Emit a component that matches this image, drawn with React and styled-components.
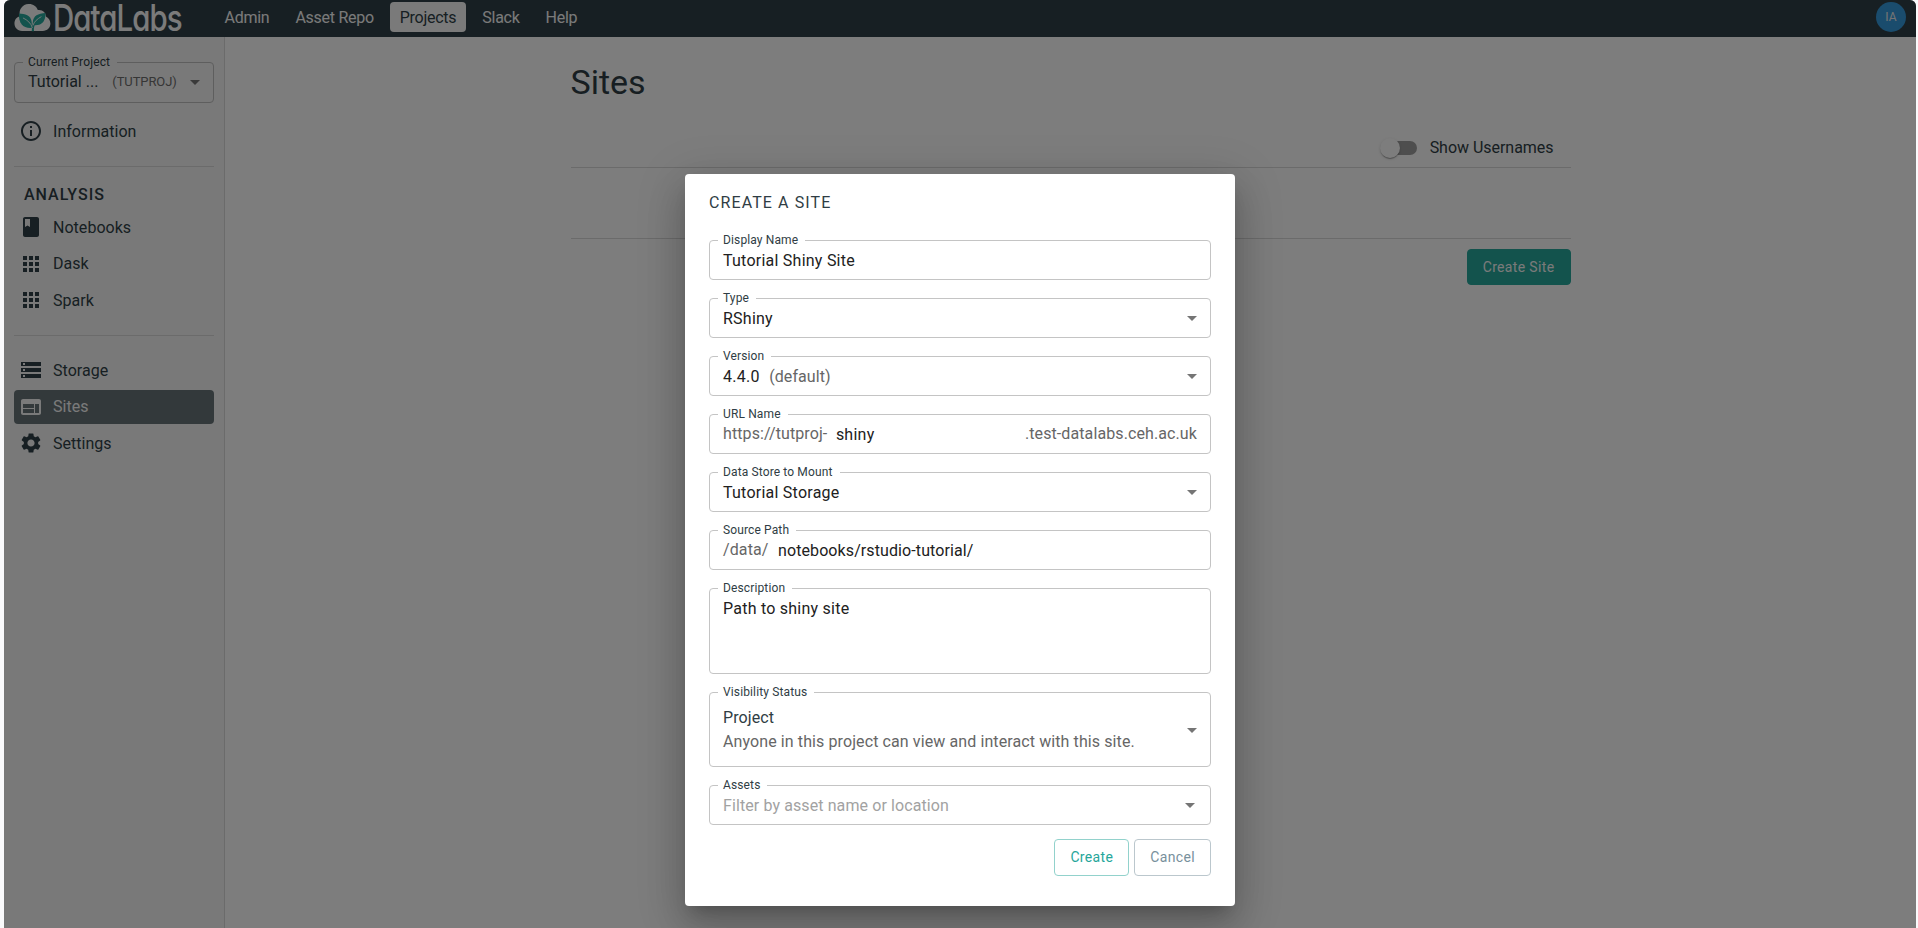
import React from "react";
import styled, { createGlobalStyle } from "styled-components";
import {
  MdInfoOutline,
  MdBook,
  MdApps,
  MdStorage,
  MdWeb,
  MdSettings,
  MdArrowDropDown,
} from "react-icons/md";

const GlobalStyle = createGlobalStyle`
  *, *::before, *::after { box-sizing: border-box; }
  body {
    margin: 0;
    background: #fafafc;
    color: #2f3d44;
    font-family: Roboto, "Liberation Sans", sans-serif;
    font-size: 16px;
    letter-spacing: 0.1px;
    overflow: hidden;
  }
`;

const Frame = styled.div`
  position: relative;
  display: flex;
  flex-direction: column;
  height: 928px;
  margin: 0 2px 0 4px;
  border-radius: 6px 6px 0 0;
  overflow: hidden;
  background: #fafafa;
`;

const TopBar = styled.header`
  flex: none;
  display: flex;
  align-items: center;
  height: 37px;
  padding: 0 10px 3px;
  background: #2f3f46;
`;

const Logo = styled.div`
  display: flex;
  align-items: center;
  width: 200.5px;
  height: 34px;
`;

const LogoText = styled.span`
  margin-left: 2px;
  padding-top: 2px;
  font-family: Inter, Lato, sans-serif;
  font-feature-settings: "cv11";
  font-size: 37px;
  font-weight: 500;
  line-height: 34px;
  letter-spacing: -1.2px;
  color: #f7f7f7;
  transform: scaleX(0.795);
  transform-origin: 0 50%;
`;

const Nav = styled.nav`
  display: flex;
  flex: 1;
  gap: 6px;
  letter-spacing: -0.27px;
`;

const NavLink = styled.a`
  padding: 0 10px;
  height: 30px;
  line-height: 31px;
  border-radius: 4px;
  color: ${(p) => (p.$active ? "#2f3f46" : "#f5f5f5")};
  background: ${(p) => (p.$active ? "#f5f5f5" : "transparent")};
`;

const Avatar = styled.div`
  width: 30px;
  height: 30px;
  border-radius: 50%;
  background: #3498db;
  color: #e8e8e8;
  font-size: 12px;
  line-height: 30px;
  text-align: center;
`;

const Body = styled.div`
  flex: 1;
  display: flex;
`;

const Sidebar = styled.aside`
  width: 221px;
  padding: 25px 10px 0;
  background: #f3f3f3;
  border-right: 1px solid #d6d6d6;
`;

const Outline = styled.div`
  position: relative;
  display: flex;
  align-items: ${(p) => (p.$top ? "flex-start" : "center")};
  height: ${(p) => p.$height || 40}px;
  padding: ${(p) => (p.$top ? "10px" : "0")} 13px 0;
  border: 1px solid ${(p) => p.$line || "#c4c4c4"};
  border-radius: 4px;
`;

const Label = styled.label`
  position: absolute;
  top: -9px;
  left: 8px;
  padding: 0 7px 0 5px;
  font-size: 12px;
  line-height: 16px;
  letter-spacing: 0.13px;
  color: #2f3d44;
  background: ${(p) => p.$bg || "#fff"};
`;

const Arrow = styled(MdArrowDropDown)`
  flex: none;
  width: 24px;
  height: 24px;
  margin-left: auto;
  margin-right: ${(p) => p.$inset || -7}px;
  margin-bottom: ${(p) => p.$lift || 0}px;
  color: #757575;
`;

const ProjectName = styled.span`
  letter-spacing: 0;
  padding-bottom: 2px;
`;

const ProjectKey = styled.span`
  margin-left: 14px;
  padding-bottom: 2px;
  font-size: 13px;
  letter-spacing: -0.1px;
  color: #6c6c6c;
`;

const MenuItem = styled.a`
  display: flex;
  align-items: center;
  gap: 10px;
  height: 34px;
  margin-bottom: 2.5px;
  padding-left: 5px;
  border-radius: 4px;
  color: ${(p) => (p.$active ? "#f5f5f5" : "#2f3f46")};
  background: ${(p) => (p.$active ? "#667277" : "transparent")};
  letter-spacing: 0.03px;

  svg {
    width: 24px;
    height: 24px;
  }
`;

const Group = styled.div`
  padding: ${(p) => p.$pad};
  border-bottom: ${(p) => (p.$last ? "0" : "1px solid #d6d6d6")};
`;

const GroupTitle = styled.div`
  padding-left: 10px;
  font-size: 16px;
  font-weight: 500;
  letter-spacing: 1px;
  line-height: 20px;
  margin-bottom: 5.5px;
`;

const Main = styled.main`
  flex: 1;
  display: flex;
  justify-content: center;
`;

const Content = styled.div`
  width: 1000px;
  padding-top: 25px;
`;

const PageTitle = styled.h1`
  margin: 0;
  font-size: 34px;
  font-weight: 400;
  line-height: 40px;
  letter-spacing: 0;
`;

const ToggleRow = styled.div`
  display: flex;
  align-items: center;
  justify-content: flex-end;
  height: 39px;
  margin-top: 27px;
  padding: 0 17px 1px 0;
  border-bottom: 1px solid #d6d6d6;
  letter-spacing: -0.03px;
`;

const Track = styled.span`
  display: flex;
  align-items: center;
  width: 34px;
  height: 14px;
  margin-right: 13px;
  border-radius: 7px;
  background: #9c9c9c;
`;

const Thumb = styled.span`
  flex: none;
  width: 20px;
  height: 20px;
  margin-left: -3px;
  border-radius: 50%;
  background: #fafafa;
  box-shadow: 0 2px 1px -1px rgba(0, 0, 0, 0.2), 0 1px 1px rgba(0, 0, 0, 0.14),
    0 1px 3px rgba(0, 0, 0, 0.12);
`;

const EmptyList = styled.div`
  height: 71px;
  border-bottom: 1px solid #d6d6d6;
`;

const Button = styled.button`
  height: ${(p) => p.$height || 36}px;
  padding: 0 15px 1px;
  border: 1px solid ${(p) => p.$border};
  border-radius: 4px;
  background: ${(p) => p.$fill || "transparent"};
  color: ${(p) => p.$color};
  font-family: inherit;
  font-size: 14px;
  letter-spacing: 0.35px;
`;

const Actions = styled.div`
  display: flex;
  justify-content: flex-end;
  gap: 5px;
  padding-top: ${(p) => p.$top}px;
`;

const Backdrop = styled.div`
  position: absolute;
  inset: 0;
  display: flex;
  justify-content: center;
  align-items: flex-start;
  padding-top: 174px;
  background: rgba(0, 0, 0, 0.5);
`;

const Dialog = styled.section`
  width: 550px;
  height: 732px;
  padding: 19px 24px 0;
  border-radius: 4px;
  background: #fff;
  box-shadow: 0 11px 15px -7px rgba(0, 0, 0, 0.2),
    0 24px 38px 3px rgba(0, 0, 0, 0.14), 0 9px 46px 8px rgba(0, 0, 0, 0.12);
`;

const DialogTitle = styled.h2`
  margin: 0 0 27px;
  font-size: 16px;
  font-weight: 400;
  letter-spacing: 1.1px;
  line-height: 20px;
`;

const Fields = styled.div`
  display: flex;
  flex-direction: column;
  gap: 18px;
`;

const Value = styled.span`
  color: #212121;
  letter-spacing: ${(p) => (p.$long ? 0.1 : 0.24)}px;
  white-space: pre;
`;

const Muted = styled.span`
  color: ${(p) => p.$color || "#666"};
  margin-left: ${(p) => p.$before || 0}px;
  margin-right: ${(p) => p.$gap || 0}px;
`;

const Prefix = styled(Muted)`
  padding-bottom: 1px;
`;

const Suffix = styled(Prefix)`
  margin-left: auto;
`;

const Stack = styled.div`
  display: flex;
  flex-direction: column;
  line-height: 24px;
`;

function CloudLeaf() {
  return (
    <svg width="41" height="31" viewBox="0 0 41 31">
      <path
        d="M9 30.5C3.500 30.500 0.500 26.500 0.500 22c0-4 2.300-7 6-8C5 6.500 9.500 1 16 .6c5-.3 9 2.400 10.500 6.600C32 6.500 35.500 10 35.500 14.500c3 1.500 5 4.300 5 7.800 0 4.700-3.500 8.200-8.500 8.200z"
        fill="#f7f7f7"
      />
      <path d="M5.500 11c7 .2 13 2.500 14 8.300l.8 7.700C10.500 28 5 22.500 5.500 11z" fill="#26a69a" />
      <path d="M35 10.500c-8 .2-13.800 3.500-14 10l-.3 3.500C31 25.500 35.500 19.500 35 10.500z" fill="#26a69a" />
      <path d="M18.500 22.500c1.600 2.500 1.700 5 1.200 8.300h2.600c-.4-3.500.2-6 1.600-8.300l-2.600 1.300z" fill="#26a69a" />
      <path
        d="M10 16c5 2.300 9 6 10.500 11M30.500 14.500c-4.500 2.500-8 5.500-9.500 10"
        fill="none"
        stroke="#f7f7f7"
        strokeWidth="1"
      />
    </svg>
  );
}

function Field({ label, children, ...box }) {
  return (
    <Outline {...box}>
      <Label>{label}</Label>
      {children}
    </Outline>
  );
}

function Item({ icon: Icon, children, active }) {
  return (
    <MenuItem $active={active}>
      <Icon />
      {children}
    </MenuItem>
  );
}

export default function App() {
  return (
    <>
      <GlobalStyle />
      <Frame>
        <TopBar>
          <Logo>
            <CloudLeaf />
            <LogoText>DataLabs</LogoText>
          </Logo>
          <Nav>
            <NavLink>Admin</NavLink>
            <NavLink>Asset Repo</NavLink>
            <NavLink $active>Projects</NavLink>
            <NavLink>Slack</NavLink>
            <NavLink>Help</NavLink>
          </Nav>
          <Avatar>IA</Avatar>
        </TopBar>
        <Body>
          <Sidebar>
            <Outline $line="#bcbcbc" $height={41}>
              <Label $bg="#f3f3f3">Current Project</Label>
              <ProjectName>Tutorial ...</ProjectName>
              <ProjectKey>(TUTPROJ)</ProjectKey>
              <Arrow $lift={2} />
            </Outline>
            <Group $pad="11px 0 15.5px">
              <Item icon={MdInfoOutline}>Information</Item>
            </Group>
            <Group $pad="17.5px 0 15.5px">
              <GroupTitle>ANALYSIS</GroupTitle>
              <Item icon={MdBook}>Notebooks</Item>
              <Item icon={MdApps}>Dask</Item>
              <Item icon={MdApps}>Spark</Item>
            </Group>
            <Group $pad="17px 0 0" $last>
              <Item icon={MdStorage}>Storage</Item>
              <Item icon={MdWeb} active>
                Sites
              </Item>
              <Item icon={MdSettings}>Settings</Item>
            </Group>
          </Sidebar>
          <Main>
            <Content>
              <PageTitle>Sites</PageTitle>
              <ToggleRow>
                <Track>
                  <Thumb />
                </Track>
                Show Usernames
              </ToggleRow>
              <EmptyList />
              <Actions $top={10}>
                <Button $fill="#26a69a" $border="#26a69a" $color="#f5f5f5">
                  Create Site
                </Button>
              </Actions>
            </Content>
          </Main>
        </Body>
        <Backdrop>
          <Dialog>
            <DialogTitle>CREATE A SITE</DialogTitle>
            <Fields>
              <Field label="Display Name">
                <Value>Tutorial Shiny Site</Value>
              </Field>
              <Field label="Type">
                <Value>RShiny</Value>
                <Arrow />
              </Field>
              <Field label="Version">
                <Value>4.4.0</Value>
                <Muted $before={9.5}>(default)</Muted>
                <Arrow />
              </Field>
              <Field label="URL Name">
                <Prefix $gap={8.5}>https://tutproj-</Prefix>
                <Value>shiny</Value>
                <Suffix>.test-datalabs.ceh.ac.uk</Suffix>
              </Field>
              <Field label="Data Store to Mount">
                <Value>Tutorial Storage</Value>
                <Arrow />
              </Field>
              <Field label="Source Path">
                <Prefix $gap={9.5}>/data/</Prefix>
                <Value $long>notebooks/rstudio-tutorial/</Value>
              </Field>
              <Field label="Description" $height={86} $top>
                <Value>Path to shiny site</Value>
              </Field>
              <Field label="Visibility Status" $height={75}>
                <Stack>
                  <span>Project</span>
                  <Muted>Anyone in this project can view and interact with this site.</Muted>
                </Stack>
                <Arrow />
              </Field>
              <Field label="Assets">
                <Muted $color="#a2a2a2">Filter by asset name or location</Muted>
                <Arrow $inset={-5} />
              </Field>
            </Fields>
            <Actions $top={14}>
              <Button $height={37} $border="#92d2cc" $color="#26a69a">
                Create
              </Button>
              <Button $height={37} $border="#bbc7cd" $color="#78909c">
                Cancel
              </Button>
            </Actions>
          </Dialog>
        </Backdrop>
      </Frame>
    </>
  );
}
